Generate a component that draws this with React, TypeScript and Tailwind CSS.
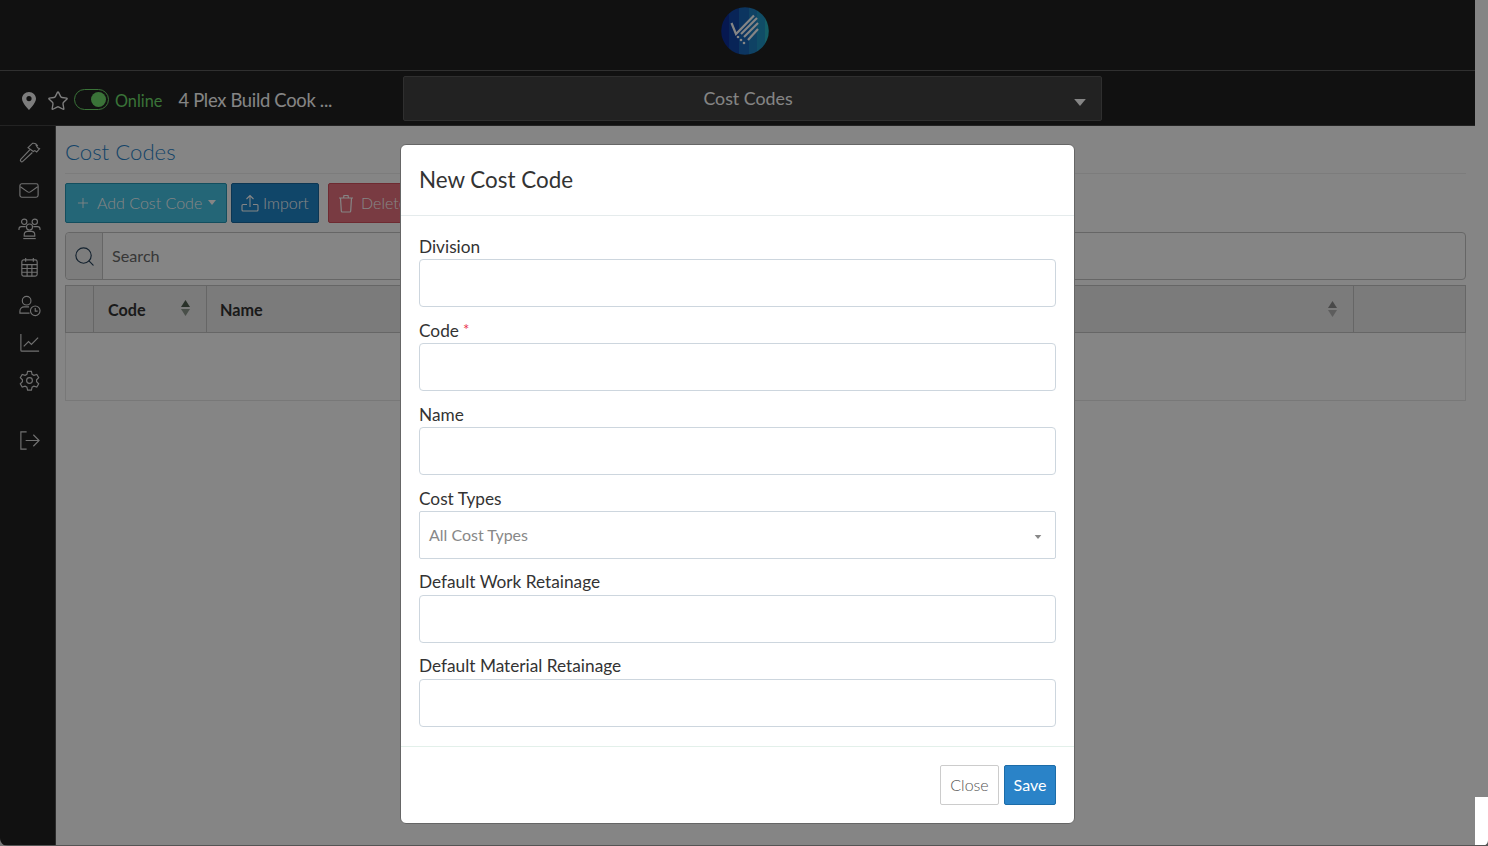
import { Plus, Search, Star } from "lucide-react";
import React from "react";

const lato = "font-['Lato','Noto_Sans',sans-serif]";

const Caret = ({ className }: { className: string }) => (
  <svg className={className} viewBox="0 0 10 6" fill="currentColor">
    <path d="M0 0h10L5 6z" />
  </svg>
);

const SortArrows = ({ className }: { className: string }) => (
  <svg className={className} viewBox="0 0 9 16" fill="currentColor">
    <path d="M4.500 0 9 7H0z" />
    <path d="M0 9h9l-4.500 7z" opacity="0.6" />
  </svg>
);

const Logo = () => (
  <svg className="w-12 h-12" viewBox="0 0 48 48">
    <defs>
      <clipPath id="logo-clip">
        <circle cx="24" cy="24" r="23.800" />
      </clipPath>
    </defs>
    <g clipPath="url(#logo-clip)">
      <rect x="0" y="0" width="8" height="48" fill="#0c2f9a" />
      <rect x="8" y="0" width="10" height="48" fill="#1046a8" />
      <rect x="18" y="0" width="10" height="48" fill="#1767b8" />
      <rect x="28" y="0" width="8" height="48" fill="#1d7fc0" />
      <rect x="36" y="0" width="8" height="48" fill="#2095c4" />
      <rect x="44" y="0" width="4" height="48" fill="#28b4c4" />
    </g>
    <g stroke="#ffffff" strokeWidth="2.200" fill="none">
      <path d="M10.500 16 15 27 33 8.500" />
      <path d="M20 27 36 11" />
      <path d="M23 30 37 16" />
      <path d="M27 33 37 22" />
    </g>
    <g fill="#ffffff">
      <circle cx="17" cy="30" r="1.300" />
      <circle cx="20" cy="33" r="1.300" />
      <circle cx="23" cy="36" r="1.300" />
    </g>
  </svg>
);

const sideIcons = [
  {
    y: "h-[38px]",
    d: (
      <>
        <path d="M12.500 9 2.800 19.200a1.500 1.500 0 0 0 .2 2 1.500 1.500 0 0 0 2 .1L15 12" />
        <path d="M10.500 7 15 2.500c2-.5 4 .3 5 2h-1l1.500 2.500 2 1-3 3.500-2-1.500-1.500 1L10.500 7z" />
      </>
    ),
  },
  {
    y: "h-[38px]",
    d: (
      <>
        <rect x="2" y="5" width="19" height="14" rx="2" />
        <path d="m2.500 8 7.200 5.200c1.100.8 2.500.8 3.600 0L20.500 8" />
      </>
    ),
  },
  {
    y: "h-[38px]",
    d: (
      <>
        <circle cx="6.500" cy="5" r="2.800" />
        <circle cx="17.500" cy="5" r="2.800" />
        <circle cx="12" cy="10.500" r="3.200" />
        <path d="M1 13.500v-1c0-1.500 1-2.500 2.500-2.500H8" />
        <path d="M23 13.500v-1c0-1.500-1-2.500-2.500-2.500H16" />
        <path d="M6.500 20v-1.500c0-2 1.500-3.500 3.500-3.500h4c2 0 3.500 1.500 3.500 3.500V20z" />
        <path d="M5.500 22.500h13" />
      </>
    ),
  },
  {
    y: "h-[40px]",
    d: (
      <>
        <rect x="4" y="4" width="16" height="17" rx="2" />
        <path d="M8 2v4M16 2v4M4 9h16M4 13h16M4 17h16M9.500 9v12M14.500 9v12" />
      </>
    ),
  },
  {
    y: "h-[36px]",
    d: (
      <>
        <circle cx="9" cy="7" r="4.500" />
        <path d="M12 20H2v-2c0-2.500 2-4.500 4.500-4.500h5" />
        <circle cx="18" cy="17.500" r="5" />
        <path d="M18 14.500v3.300h2.500" />
      </>
    ),
  },
  {
    y: "h-[38px]",
    d: (
      <>
        <path d="M3 3v17c0 .5.300 1 1 1h18" />
        <path d="m6 16 5-5 3 3 7-7" />
      </>
    ),
  },
  {
    y: "h-[38px]",
    d: (
      <>
        <circle cx="12" cy="12" r="3" />
        <path d="M10 2.500h4l.7 3 1.900 1.100 3-.9 2 3.400-2.200 2.100v2l2.200 2.200-2 3.400-3-.9-1.900 1.100-.7 3h-4l-.7-3-1.900-1.100-3 .9-2-3.400 2.200-2.200v-2L2.400 9.100l2-3.400 3 .9 1.900-1.100z" />
      </>
    ),
  },
];

const Sidebar = () => (
  <aside className="w-[56px] shrink-0 bg-[#212121] border-r border-[#555] flex flex-col items-center pt-[7px] pl-[3px] text-[#d9d9d9]">
    {sideIcons.map((icon, i) => (
      <div key={i} className={`${icon.y} flex items-center justify-center`}>
        <svg className="w-[23px] h-[23px]" viewBox="0 0 24 24" fill="none" stroke="currentColor" strokeWidth="1.200">
          {icon.d}
        </svg>
      </div>
    ))}
    <div className="mt-[22px] h-[38px] flex items-center justify-center">
      <svg className="w-[23px] h-[23px]" viewBox="0 0 24 24" fill="none" stroke="currentColor" strokeWidth="1.200">
        <path d="M9 3H3v18h6" />
        <path d="M8 12h14M16 6l6 6-6 6" />
      </svg>
    </div>
  </aside>
);

const TopBars = () => (
  <header className="shrink-0">
    <div className="h-[71px] bg-[#212121] border-b border-[#5c5c5c] flex justify-center pt-[7px] pl-[14px]">
      <Logo />
    </div>
    <div className="h-[55px] bg-[#212121] border-b border-[#444] flex items-center relative">
      <div className="flex items-center pl-[22px] w-[403px] text-white">
        <svg className="w-[14px] h-[18px] mt-[6px]" viewBox="0 0 14 18" fill="#f0f0f0">
          <path
            fillRule="evenodd"
            d="M7 0C3.100 0 0 3 0 6.800 0 11 7 18 7 18s7-7 7-11.200C14 3 10.900 0 7 0zm0 9.200a2.600 2.600 0 1 1 0-5.200 2.600 2.600 0 0 1 0 5.200z"
          />
        </svg>
        <Star className="w-[22px] h-[22px] ml-[11px] mt-[6px] text-[#f0f0f0]" strokeWidth={1.500} />
        <div className="ml-[5px] mt-[3px] w-[35px] h-[21px] rounded-full border border-[#6fdc6c] flex items-center justify-end pr-[2px]">
          <div className="w-[15px] h-[15px] rounded-full bg-[#6fdc6c]" />
        </div>
        <span className={`${lato} ml-[6px] text-[16.300px] text-[#6fdc6c] mt-[7px]`}>Online</span>
        <span className={`${lato} ml-[16px] text-[18.400px] tracking-[-0.3px] text-white mt-[5px]`}>4 Plex Build Cook ...</span>
      </div>
      <div className="ml-0 w-[699px] h-[45px] rounded-[2px] bg-[#414141] border border-[#5a5a5a] flex items-center relative">
        <span className={`${lato} w-full text-center text-[17.800px] text-white pr-[9px]`}>Cost Codes</span>
        <Caret className="absolute right-[15px] top-[22px] w-[12px] h-[7px] text-white" />
      </div>
    </div>
  </header>
);

const Content = () => (
  <main className={`${lato} flex-1 bg-white pl-[9px] pr-[9px] pt-[11px] min-w-0`}>
    <h1 className="text-[22.200px] leading-[30px] font-light text-[#2a83c8] pb-[6px] border-b border-[#eeeeee] h-[37px]">
      Cost Codes
    </h1>
    <div className="flex mt-[9px] text-[16px] text-white font-light">
      <button className="w-[162px] h-[40px] rounded-[2px] bg-[#45c3e4] border border-[#2596b5] flex items-center pl-[9px]">
        <Plus className="w-[16px] h-[16px] mr-[6px]" strokeWidth={1.300} />
        Add Cost Code
        <Caret className="w-[8px] h-[5px] ml-[6px] mb-[2px]" />
      </button>
      <button className="ml-[4px] w-[88px] h-[40px] rounded-[2px] bg-[#1f86c9] border border-[#17699f] flex items-center pl-[9px]">
        <svg className="w-[18px] h-[18px] mr-[4px]" viewBox="0 0 18 18" fill="none" stroke="currentColor" strokeWidth="1.100">
          <path d="M9 13V1.500M5.500 5 9 1.500 12.500 5" />
          <path d="M6 10.500H2c-.6 0-1 .4-1 1V16c0 .6.400 1 1 1h14c.6 0 1-.4 1-1v-4.500c0-.6-.4-1-1-1h-4" />
        </svg>
        Import
      </button>
      <button className="ml-[9px] w-[100px] h-[40px] rounded-[2px] bg-[#e8717f] border border-[#d3515f] flex items-center pl-[9px]">
        <svg className="w-[16px] h-[19px] mr-[7px]" viewBox="0 0 16 19" fill="none" stroke="currentColor" strokeWidth="1.200">
          <path d="M1 4h14M5.500 4l.5-2.500h4l.5 2.500" />
          <path d="M2.500 4l.8 13c0 .5.500 1 1 1h7.400c.5 0 1-.5 1-1l.8-13" />
        </svg>
        Delete
      </button>
    </div>
    <div className="mt-[9px] h-[48px] rounded-[4px] border border-[#c4c4c4] flex items-stretch">
      <div className="w-[37px] bg-[#f0f0f0] border-r border-[#c4c4c4] rounded-l-[4px] flex items-center justify-center">
        <Search className="w-[23px] h-[23px] text-[#26415a]" strokeWidth={1.200} />
      </div>
      <div className="flex items-center pl-[9px] text-[16.200px] text-[#6a6a6a]">Search</div>
    </div>
    <div className="mt-[5px]">
      <div className="h-[48px] bg-[#ebebeb] border border-[#c4c4c4] flex text-[16.200px] font-bold text-[#333] items-stretch">
        <div className="w-[28px] border-r border-[#c4c4c4]" />
        <div className="w-[113px] border-r border-[#c4c4c4] flex items-center justify-between pl-[14px] pr-[16px] pt-[2px]">
          Code
          <SortArrows className="w-[9px] h-[18px] text-[#4f5f4f] mb-[4px]" />
        </div>
        <div className="flex-1 flex items-center pl-[13px] pt-[2px]">Name</div>
        <div className="w-[26px] flex items-center">
          <SortArrows className="w-[9px] h-[16px] text-[#8c8c8c]" />
        </div>
        <div className="w-[112px] border-l border-[#c4c4c4] ml-[-1px]" />
      </div>
      <div className="h-[68px] border border-t-0 border-[#e6e6e6]" />
    </div>
  </main>
);

const Field = ({ label, required, raised }: { label: string; required?: boolean; raised?: boolean }) => (
  <div className="h-[84px] flex flex-col">
    <label className={`h-[24px] text-[17.250px] leading-[24px] text-[#333] ${raised ? "-translate-y-px" : ""}`}>
      {label}
      {required && <span className="text-[#e9324b] text-[15px] relative -top-[2px] ml-[4px]">*</span>}
    </label>
    <input className="h-[48px] w-full rounded-[4px] border border-[#cdd6de] bg-white outline-none" />
  </div>
);

const Modal = () => (
  <div className={`${lato} w-[675px] h-[680px] mt-[144px] ml-[-13px] rounded-[6px] bg-white border border-[#666] flex flex-col`}>
    <div className="h-[71px] shrink-0 border-b border-[#e5ebec] pl-[18px] flex items-center">
      <h2 className="text-[22.400px] text-[#333]">New Cost Code</h2>
    </div>
    <div className="flex-1 px-[18px] pt-[19px]">
      <Field label="Division" />
      <Field label="Code" required />
      <Field label="Name" />
      <div className="h-[84px] flex flex-col">
        <label className="h-[24px] text-[17.250px] leading-[24px] text-[#333]">Cost Types</label>
        <div className="h-[48px] rounded-[2px] border border-[#cdd6de] flex items-center justify-between pl-[9px] pr-[13px] text-[16px] text-[#888]">
          All Cost Types
          <Caret className="w-[8px] h-[4px] mt-[4px] text-[#888]" />
        </div>
      </div>
      <Field label="Default Work Retainage" raised />
      <Field label="Default Material Retainage" raised />
    </div>
    <div className="h-[77px] shrink-0 border-t border-[#e3f0ea] flex justify-end items-start gap-[5px] pt-[18px] pr-[18px] text-[16px]">
      <button className="w-[59px] h-[40px] rounded-[2px] bg-white border border-[#cccccc] text-[#555] font-light">Close</button>
      <button className="w-[52px] h-[40px] rounded-[2px] bg-[#2a83c8] border border-[#1c6ca8] text-white">Save</button>
    </div>
  </div>
);

export default function App() {
  return (
    <div className="relative w-[1488px] h-[846px] overflow-hidden bg-white">
      <div className="w-[1475px] h-[846px] flex flex-col">
        <TopBars />
        <div className="flex flex-1 min-h-0">
          <Sidebar />
          <Content />
        </div>
      </div>
      <div className="absolute inset-0 bg-black/48 flex justify-center items-start">
        <Modal />
      </div>
      <div className="absolute right-0 bottom-0 w-[13px] h-[49px] bg-white" />
      <div className="absolute left-0 right-0 bottom-0 h-px bg-[#555]" />
      <svg className="absolute left-0 bottom-0 w-[8px] h-[8px]" viewBox="0 0 8 8">
        <path d="M0 0c0 4.500 3.500 8 8 8H0z" fill="#777" />
      </svg>
      <svg className="absolute right-0 bottom-0 w-[6px] h-[6px]" viewBox="0 0 6 6">
        <path d="M6 0c0 3.500-2.500 6-6 6h6z" fill="#555" />
      </svg>
    </div>
  );
}
